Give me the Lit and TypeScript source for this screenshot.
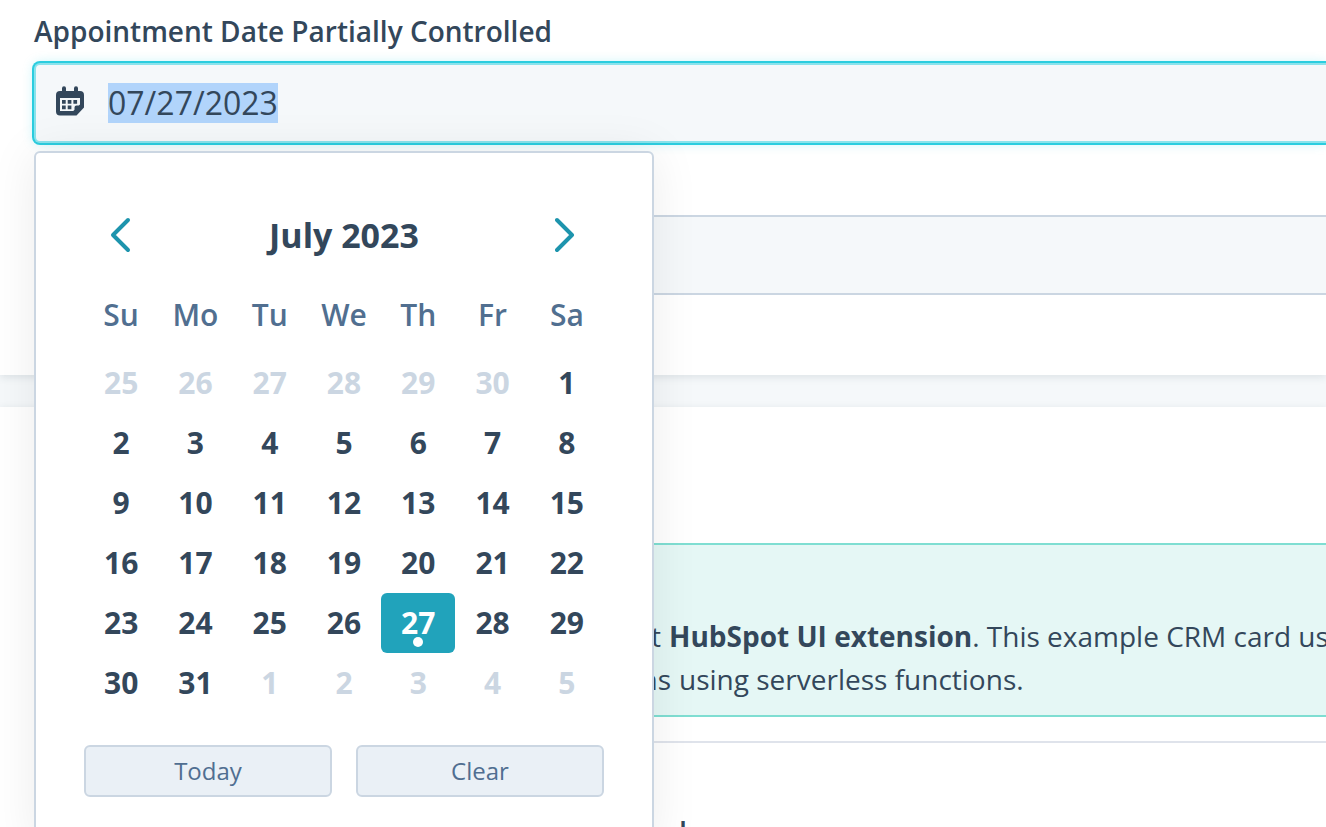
import { LitElement, html, css, svg } from "lit";
import { customElement, state, query } from "lit/decorators.js";
import { classMap } from "lit/directives/class-map.js";

interface Day {
  date: Date;
  outside: boolean;
}

const WEEKDAYS = ["Su", "Mo", "Tu", "We", "Th", "Fr", "Sa"];

const chevron = (points: string) => svg`
  <svg class="chevron" viewBox="0 0 24 36" aria-hidden="true">
    <polyline points=${points}></polyline>
  </svg>`;

@customElement("date-calendar")
export class DateCalendar extends LitElement {
  @state() private month = new Date(2023, 6, 1);
  @state() private selected: Date | null = new Date(2023, 6, 27);

  static styles = css`
    :host {
      display: block;
      box-sizing: border-box;
      padding: 48px;
      border: 2px solid #cbd6e2;
      border-radius: 6px;
      background: #fff;
      box-shadow: 0 2px 48px rgba(0, 0, 0, 0.08);
      color: #33475b;
    }
    button {
      margin: 0;
      padding: 0;
      border: 0;
      background: none;
      color: inherit;
      font: inherit;
      cursor: pointer;
    }
    .header {
      display: grid;
      grid-template-columns: 1fr 5fr 1fr;
      height: 68px;
      margin-bottom: 8px;
    }
    .title {
      margin: 0;
      align-self: center;
      text-align: center;
      font-size: 34px;
      font-weight: 700;
      line-height: 40px;
    }
    .nav {
      display: flex;
      align-items: center;
      justify-content: center;
    }
    .chevron {
      width: 24px;
      height: 36px;
      fill: none;
      stroke: #1d94ad;
      stroke-width: 4;
      stroke-linecap: round;
      stroke-linejoin: round;
    }
    table {
      width: 100%;
      table-layout: fixed;
      border-collapse: collapse;
      font-size: 30px;
      line-height: 40px;
    }
    th,
    td {
      padding: 0;
      text-align: center;
    }
    th {
      height: 76px;
      color: #516f90;
      font-weight: 600;
    }
    td {
      height: 60px;
      font-weight: 700;
    }
    .day {
      position: relative;
      display: block;
      width: 100%;
      height: 60px;
      border-radius: 6px;
    }
    .outside {
      color: #cbd6e2;
    }
    .selected {
      background: #21a3bb;
      color: #fff;
    }
    .selected::after {
      content: "";
      position: absolute;
      left: 50%;
      bottom: 6px;
      width: 10px;
      height: 10px;
      margin-left: -5px;
      border-radius: 50%;
      background: #fff;
    }
    .actions {
      display: grid;
      grid-template-columns: 1fr 1fr;
      gap: 24px;
      margin-top: 32px;
    }
    .action {
      height: 52px;
      border: 2px solid #cbd6e2;
      border-radius: 6px;
      background: #eaf0f6;
      color: #506e91;
      font-size: 24px;
      line-height: 32px;
    }
  `;

  private get weeks(): Day[][] {
    const year = this.month.getFullYear();
    const month = this.month.getMonth();
    const lead = this.month.getDay();
    return Array.from({ length: 6 }, (_, week) =>
      Array.from({ length: 7 }, (_, weekday) => {
        const date = new Date(year, month, 1 - lead + week * 7 + weekday);
        return { date, outside: date.getMonth() !== month };
      })
    );
  }

  private shift(by: number) {
    this.month = new Date(this.month.getFullYear(), this.month.getMonth() + by, 1);
  }

  private pick(date: Date | null) {
    this.selected = date;
    if (date) this.month = new Date(date.getFullYear(), date.getMonth(), 1);
    this.dispatchEvent(new CustomEvent("pick", { detail: date }));
  }

  render() {
    const title = this.month.toLocaleDateString("en-US", { month: "long", year: "numeric" });
    return html`
      <div class="header">
        <button class="nav" aria-label="Previous month" @click=${() => this.shift(-1)}>
          ${chevron("19,3 4,18 19,33")}
        </button>
        <h2 class="title">${title}</h2>
        <button class="nav" aria-label="Next month" @click=${() => this.shift(1)}>
          ${chevron("2,3 17,18 2,33")}
        </button>
      </div>
      <table>
        <thead>
          <tr>${WEEKDAYS.map((name) => html`<th scope="col">${name}</th>`)}</tr>
        </thead>
        <tbody>
          ${this.weeks.map(
            (week) => html`<tr>
              ${week.map(({ date, outside }) => {
                const selected = date.getTime() === this.selected?.getTime();
                return html`<td>
                  <button class=${classMap({ day: true, outside, selected })} @click=${() => this.pick(date)}>
                    ${date.getDate()}
                  </button>
                </td>`;
              })}
            </tr>`
          )}
        </tbody>
      </table>
      <div class="actions">
        <button class="action" @click=${() => this.pick(new Date(new Date().setHours(0, 0, 0, 0)))}>Today</button>
        <button class="action" @click=${() => this.pick(null)}>Clear</button>
      </div>
    `;
  }
}

@customElement("app-root")
export class AppRoot extends LitElement {
  @state() private value = "07/27/2023";
  @query("#appointment") private input!: HTMLInputElement;

  static styles = css`
    :host {
      display: block;
      height: 100vh;
      overflow: hidden;
      background: #f5f8fa;
      color: #33475b;
      font-family: "Open Sans", "Noto Sans", sans-serif;
      font-size: 28px;
      line-height: 43px;
    }
    .card {
      padding-left: 34px;
      background: #fff;
      box-shadow: 0 2px 8px rgba(45, 62, 80, 0.12);
    }
    .form {
      padding-top: 11px;
      padding-bottom: 80px;
    }
    .label {
      display: block;
      margin-bottom: 12px;
      font-weight: 600;
      line-height: 40px;
    }
    .picker {
      position: relative;
    }
    .field {
      display: flex;
      align-items: center;
      gap: 24px;
      box-sizing: border-box;
      height: 80px;
      padding-left: 20px;
      border: 2px solid #cbd6e2;
      border-right: 0;
      border-radius: 6px 0 0 6px;
      background: #f5f8fa;
    }
    .focused {
      border-color: #8ae3ec;
      box-shadow: 0 0 0 2px #2bcddf, 0 0 12px rgba(0, 208, 228, 0.25);
    }
    .icon {
      flex: none;
      width: 28px;
      height: 30px;
      margin-bottom: 4px;
    }
    .text {
      flex: 1;
      min-width: 0;
      height: 40px;
      padding: 0;
      border: 0;
      outline: 0;
      background: none;
      color: inherit;
      caret-color: transparent;
      font: inherit;
      font-size: 32px;
      line-height: 40px;
    }
    .text::selection {
      background: #b1d4fb;
      color: #33475b;
    }
    .popover {
      position: absolute;
      top: 88px;
      left: 0;
      width: 620px;
      z-index: 1;
    }
    .second {
      margin-top: 72px;
    }
    .details {
      margin-top: 32px;
      padding-top: 136px;
      padding-bottom: 32px;
    }
    .alert {
      padding: 70px 0 14px;
      border: 2px solid #7fded2;
      border-right: 0;
      background: #e5f7f5;
    }
    .line {
      display: grid;
      grid-template-columns: 625px max-content;
      gap: 8px;
      margin: 0;
      white-space: nowrap;
    }
    .lead {
      text-align: right;
    }
    .using {
      grid-template-columns: 635px max-content;
    }
    .divider {
      height: 2px;
      margin: 24px 0 68px;
      border: 0;
      background: #dfe3eb;
    }
    .subtitle {
      width: 653px;
      margin: 0;
      text-align: right;
      font-size: 28px;
      font-weight: 600;
    }
  `;

  firstUpdated() {
    this.input.focus({ preventScroll: true });
    this.input.select();
  }

  private onPick(event: CustomEvent<Date | null>) {
    this.value = event.detail
      ? event.detail.toLocaleDateString("en-US", { month: "2-digit", day: "2-digit", year: "numeric" })
      : "";
  }

  render() {
    return html`
      <section class="card form">
        <label class="label" for="appointment">Appointment Date Partially Controlled</label>
        <div class="picker">
          <div class="field focused">
            <svg class="icon" viewBox="0 0 28 30" aria-hidden="true">
              <path
                fill="#33475b"
                d="M4 5H6V2.2a2 2 0 0 1 4 0V5h8V2.2a2 2 0 0 1 4 0V5h2a4 4 0 0 1 4 4v12.5L20.5 29.5H4a4 4 0 0 1-4-4V9a4 4 0 0 1 4-4z"
              ></path>
              <path fill="#f5f8fa" d="M4 12H24V18.4L22.8 19.6H20.5a2 2 0 0 0-2 2V23.8L17.2 25H4z"></path>
              <path
                fill="#33475b"
                d="M6 14h3.7v3.7H6zM11.7 14h3.7v3.7h-3.7zM17.4 14h3.7v3.7h-3.7zM6 19.6h3.7v3.7H6zM11.7 19.6h3.7v3.7h-3.7z"
              ></path>
            </svg>
            <input class="text" id="appointment" type="text" autocomplete="off" .value=${this.value} />
          </div>
          <date-calendar class="popover" @pick=${this.onPick}></date-calendar>
        </div>
        <div class="field second">
          <input class="text" type="text" aria-label="Second date" />
        </div>
      </section>
      <section class="card details">
        <div class="alert">
          <p class="line">
            <span class="lead">first</span>
            <span><strong>HubSpot UI extension</strong>. This example CRM card uses</span>
          </p>
          <p class="line using">
            <span class="lead">functions</span>
            <span>using serverless functions.</span>
          </p>
        </div>
        <hr class="divider" />
        <h3 class="subtitle">card</h3>
      </section>
    `;
  }
}
